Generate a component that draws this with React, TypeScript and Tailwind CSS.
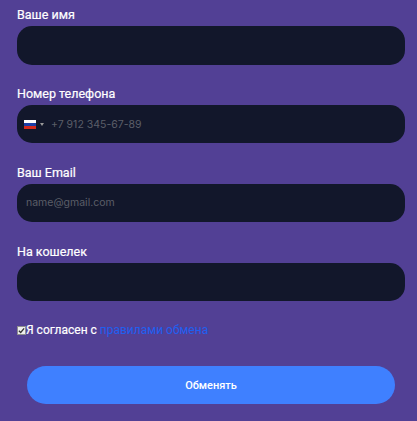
function Field({ label, children, tall }: { label: string; children?: React.ReactNode; tall?: boolean }) {
  return (
    <div className="flex flex-col">
      <label className="h-[26px] pt-[6px] font-['Roboto',sans-serif] text-[12.5px] leading-[18px] font-normal text-white [-webkit-text-stroke:0.2px_white]">
        {label}
      </label>
      <div className={`flex items-center rounded-[15px] bg-[#12172b] ${tall ? "h-[39px]" : "h-[38px]"}`}>{children}</div>
    </div>
  );
}

export default function App() {
  return (
    <div className="h-[421px] w-[417px] overflow-hidden bg-[#524095] font-['Roboto',sans-serif]">
      <form className="flex flex-col pr-[12px] pl-[17px]">
        <Field label="Ваше имя" tall />
        <div className="mt-[14px]">
          <Field label="Номер телефона">
            <span className="ml-[7px] flex h-[9px] w-[12px] flex-col">
              <span className="h-[3px] bg-white" />
              <span className="h-[3px] bg-[#1c3fa8]" />
              <span className="h-[3px] bg-[#d52b1e]" />
            </span>
            <span className="ml-[4px] h-0 w-0 border-x-[2px] border-t-[3px] border-x-transparent border-t-[#9a9a9a]" />
            <input
              placeholder="+7 912 345-67-89"
              className="ml-[7px] min-w-0 flex-1 bg-transparent pt-[2px] font-['Inter',sans-serif] text-[10.5px] outline-none placeholder:text-[#5b5e68]"
            />
          </Field>
        </div>
        <div className="mt-[15px]">
          <Field label="Ваш Email">
            <input
              placeholder="name@gmail.com"
              className="ml-[9px] min-w-0 flex-1 bg-transparent font-['Inter',sans-serif] text-[10.5px] outline-none placeholder:text-[#5b5e68]"
            />
          </Field>
        </div>
        <div className="mt-[15px]">
          <Field label="На кошелек" />
        </div>
        <div className="mt-[22px] flex h-[14px] items-center text-[12px]">
          <span className="flex h-[9px] w-[9px] items-center justify-center border border-[#8f8f8f] bg-[#eeeeee]">
            <svg viewBox="0 0 8 8" className="h-[7px] w-[7px]" fill="none" stroke="#333333" strokeWidth="1.5">
              <path d="M1 4.2 3.1 6.3 7 1.6" />
            </svg>
          </span>
          <span className="text-white [-webkit-text-stroke:0.2px_white]">Я согласен с&nbsp;</span>
          <a className="text-[#1f5ff0]">правилами обмена</a>
        </div>
        <button
          type="button"
          className="mt-[29px] ml-[10px] h-[38px] w-[368px] rounded-[19px] bg-[#3f80ff] pt-[2px] text-[11px] font-medium text-white"
        >
          Обменять
        </button>
      </form>
    </div>
  );
}
